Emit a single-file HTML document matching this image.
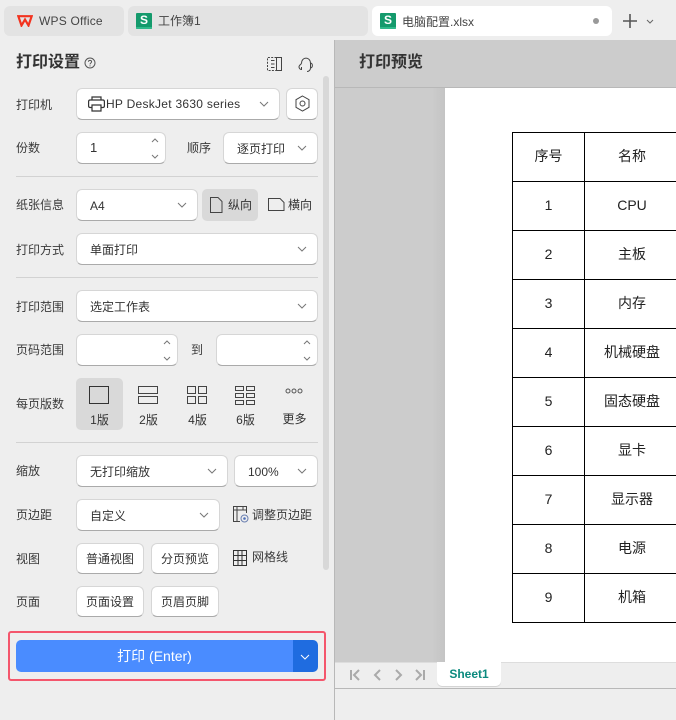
<!DOCTYPE html>
<html lang="zh"><head><meta charset="utf-8"><title>打印设置</title>
<style>
html,body{margin:0;padding:0}
body{width:676px;height:720px;overflow:hidden;position:relative;background:#eee;font-family:"Liberation Sans","Noto Sans CJK SC",sans-serif;font-size:12px;color:#333}
.a,.box,.t,svg.i{position:absolute}
.box{box-sizing:border-box;background:#fff;border:1px solid #d6d6d6;border-bottom-color:#aaa;border-radius:6px}
.t{white-space:nowrap;line-height:16px}
.l{color:#3a3a3a;left:16px}
.hr{position:absolute;left:16px;width:302px;height:1px;background:#d2d2d2}
svg.i{fill:none;stroke:#555;stroke-width:1}
.c{position:absolute;width:10px;height:6px}
.cell{position:absolute;text-align:center;font-size:14px;line-height:20px;color:#222;white-space:nowrap}
.ctr{text-align:center}
.s{position:absolute;width:16px;height:16px;background:#149a6c;border-radius:1px;color:#fff;text-align:center;font:bold 12px/14px "Liberation Sans",sans-serif;overflow:hidden}
.s:after{content:"";position:absolute;left:0;right:0;bottom:0;height:2px;background:#2fb98a}
</style></head><body>
<!-- tabs -->
<div class="a" style="left:4px;top:6px;width:120px;height:30px;background:#e3e3e3;border-radius:6px"></div>
<svg class="i" style="left:17px;top:15px;stroke:#f2331f;stroke-width:2.2;stroke-linejoin:miter" width="16" height="12" viewBox="0 0 16 12"><path d="M1.300 1.200 4.500 10.500 8 4.500 11.500 10.500 14.700 1.200 8 1.200Z"/></svg>
<div class="t" style="left:39px;top:13px;color:#444;letter-spacing:.2px">WPS Office</div>
<div class="a" style="left:128px;top:6px;width:240px;height:30px;background:#e3e3e3;border-radius:6px"></div>
<div class="s" style="left:136px;top:13px">S</div>
<div class="t" style="left:158px;top:13px;color:#444">工作簿1</div>
<div class="a" style="left:372px;top:6px;width:240px;height:30px;background:#fff;border-radius:6px"></div>
<div class="s" style="left:380px;top:13px">S</div>
<div class="t" style="left:402px;top:14px;color:#444">电脑配置.xlsx</div>
<div class="a" style="left:593px;top:18px;width:6px;height:6px;border-radius:50%;background:#999"></div>
<svg class="i" style="left:622px;top:13px;stroke:#555;stroke-width:1.6" width="16" height="16"><path d="M8 1V15M1 8H15"/></svg>
<svg class="i" style="left:646px;top:19px;stroke:#666" width="8" height="5"><path d="M1 1 4 4 7 1"/></svg>

<!-- preview -->
<div class="a" style="left:334px;top:40px;width:1px;height:680px;background:#b8b8b8"></div>
<div class="a" style="left:335px;top:40px;width:341px;height:47px;background:#ccc;border-bottom:1px solid #b8b8b8"></div>
<div class="t" style="left:359px;top:53px;font-size:16px;line-height:20px;font-weight:700;color:#333">打印预览</div>
<div class="a" style="left:335px;top:88px;width:110px;height:574px;background:linear-gradient(90deg,#ccc 0,#ccc 88%,#c4c4c4 100%)"></div>
<div class="a" style="left:445px;top:88px;width:231px;height:574px;background:#fff"></div>
<div class="a" style="left:512px;top:132px;width:180px;height:491px;box-sizing:border-box;border:1px solid #000;border-bottom:1px solid #000"></div>
<div class="a" style="left:584px;top:132px;width:1px;height:491px;background:#000"></div>
<div class="a" style="left:512px;top:181px;width:164px;height:1px;background:#000"></div>
<div class="a" style="left:512px;top:230px;width:164px;height:1px;background:#000"></div>
<div class="a" style="left:512px;top:279px;width:164px;height:1px;background:#000"></div>
<div class="a" style="left:512px;top:328px;width:164px;height:1px;background:#000"></div>
<div class="a" style="left:512px;top:377px;width:164px;height:1px;background:#000"></div>
<div class="a" style="left:512px;top:426px;width:164px;height:1px;background:#000"></div>
<div class="a" style="left:512px;top:475px;width:164px;height:1px;background:#000"></div>
<div class="a" style="left:512px;top:524px;width:164px;height:1px;background:#000"></div>
<div class="a" style="left:512px;top:573px;width:164px;height:1px;background:#000"></div>
<div class="cell" style="left:513px;width:71px;top:146px">序号</div><div class="cell" style="left:585px;width:94px;top:146px">名称</div>
<div class="cell" style="left:513px;width:71px;top:195px">1</div><div class="cell" style="left:585px;width:94px;top:195px">CPU</div>
<div class="cell" style="left:513px;width:71px;top:244px">2</div><div class="cell" style="left:585px;width:94px;top:244px">主板</div>
<div class="cell" style="left:513px;width:71px;top:293px">3</div><div class="cell" style="left:585px;width:94px;top:293px">内存</div>
<div class="cell" style="left:513px;width:71px;top:342px">4</div><div class="cell" style="left:585px;width:94px;top:342px">机械硬盘</div>
<div class="cell" style="left:513px;width:71px;top:391px">5</div><div class="cell" style="left:585px;width:94px;top:391px">固态硬盘</div>
<div class="cell" style="left:513px;width:71px;top:440px">6</div><div class="cell" style="left:585px;width:94px;top:440px">显卡</div>
<div class="cell" style="left:513px;width:71px;top:489px">7</div><div class="cell" style="left:585px;width:94px;top:489px">显示器</div>
<div class="cell" style="left:513px;width:71px;top:538px">8</div><div class="cell" style="left:585px;width:94px;top:538px">电源</div>
<div class="cell" style="left:513px;width:71px;top:587px">9</div><div class="cell" style="left:585px;width:94px;top:587px">机箱</div>

<!-- sheet bar -->
<div class="a" style="left:335px;top:662px;width:341px;height:26px;background:#eee;border-top:1px solid #ddd;box-sizing:border-box"></div>
<div class="a" style="left:335px;top:688px;width:341px;height:1px;background:#b8b8b8"></div>
<svg class="i" style="left:349px;top:669px;stroke:#aaa;stroke-width:2" width="80" height="12"><path d="M2 1V11M10 1 5 6 10 11M31 1 26 6 31 11M47 1 52 6 47 11M67 1 72 6 67 11M75 1V11"/></svg>
<div class="a ctr" style="left:437px;top:662px;width:64px;height:24px;background:#fff;border-radius:0 0 5px 5px;box-shadow:0 1px 0 #d4d4d4;font-size:12px;font-weight:bold;line-height:24px;color:#0b8a7e">Sheet1</div>

<!-- settings header -->
<div class="t" style="left:16px;top:53px;font-size:16px;line-height:20px;font-weight:700;color:#333">打印设置</div>
<svg class="i" style="left:84px;top:57px;stroke:#555" width="12" height="12"><circle cx="6" cy="6" r="5"/><path d="M4.400 4.800C4.400 2.900 7.600 2.900 7.600 4.800 7.600 6 6 6 6 7.400M6 8.400V9.400"/></svg>
<svg class="i" style="left:267px;top:57px;stroke:#444" width="15" height="14"><path d="M9.500.5H.5V13.500H9.500" stroke-dasharray="2 1.300"/><path d="M9.500.5H14.500V13.500H9.500ZM4 3.500H7.500M4 7H7.500M4 10.500H7.500"/></svg>
<svg class="i" style="left:298px;top:56px;stroke:#444" width="16" height="17"><path d="M3.500 7.500C3.500 .3 12.500 .3 12.500 7.500V12C12.500 14 11 15.500 9 15.500M3.500 7.500 1.500 9.500C.3 11 1.500 13.500 3.500 13.500V11M12.500 7C15 7.500 15 11.500 12.500 12"/></svg>

<div class="a" style="left:323px;top:76px;width:6px;height:494px;background:#d8d8d8;border-radius:3px"></div>

<!-- row: printer -->
<div class="t l" style="top:97px">打印机</div>
<div class="box" style="left:76px;top:88px;width:204px;height:32px"></div>
<svg class="i" style="left:88px;top:96px;stroke:#333;stroke-width:1.200" width="17" height="16"><path d="M4 4V1H13V4M4 11.500H2A1.500 1.500 0 0 1 .6 10V5.500A1.500 1.500 0 0 1 2 4H15A1.500 1.500 0 0 1 16.400 5.500V10A1.500 1.500 0 0 1 15 11.500H13M4 9H13V15H4Z"/></svg>
<div class="t" style="left:106px;top:96px;color:#333;letter-spacing:.27px">HP DeskJet 3630 series</div>
<svg class="c" style="left:259px;top:101px" viewBox="0 0 10 6" fill="none" stroke="#777"><path d="M1 1 5 5 9 1"/></svg>
<div class="box" style="left:286px;top:88px;width:32px;height:32px"></div>
<svg class="i" style="left:295px;top:95px;stroke:#444" width="15" height="17"><path d="M7.500 1 14 4.700V12.300L7.500 16 1 12.300V4.700Z"/><circle cx="7.500" cy="8.500" r="2.500"/></svg>

<!-- row: copies -->
<div class="t l" style="top:140px">份数</div>
<div class="box" style="left:76px;top:132px;width:90px;height:32px"></div>
<div class="t" style="left:90px;top:140px;font-size:13px">1</div>
<svg class="i" style="left:150px;top:137px;stroke:#777" width="10" height="23"><path d="M2 5 5 2 8 5M2 18 5 21 8 18"/></svg>
<div class="t" style="left:187px;top:140px;color:#3a3a3a">顺序</div>
<div class="box" style="left:223px;top:132px;width:95px;height:32px"></div>
<div class="t" style="left:237px;top:141px">逐页打印</div>
<svg class="c" style="left:297px;top:145px" viewBox="0 0 10 6" fill="none" stroke="#777"><path d="M1 1 5 5 9 1"/></svg>
<div class="hr" style="top:176px"></div>

<!-- row: paper -->
<div class="t l" style="top:197px">纸张信息</div>
<div class="box" style="left:76px;top:189px;width:122px;height:32px"></div>
<div class="t" style="left:90px;top:198px">A4</div>
<svg class="c" style="left:177px;top:202px" viewBox="0 0 10 6" fill="none" stroke="#777"><path d="M1 1 5 5 9 1"/></svg>
<div class="a" style="left:202px;top:189px;width:56px;height:32px;background:#d9d9d9;border-radius:5px"></div>
<svg class="i" style="left:210px;top:197px;stroke:#444" width="13" height="16"><path d="M.5.5H8L12 4.500V15.500H.5Z"/></svg>
<div class="t" style="left:228px;top:197px">纵向</div>
<svg class="i" style="left:268px;top:198px;stroke:#444" width="17" height="14"><path d="M.5.5H12L16 4.500V12.500H.5Z"/></svg>
<div class="t" style="left:288px;top:197px">横向</div>

<!-- row: mode -->
<div class="t l" style="top:242px">打印方式</div>
<div class="box" style="left:76px;top:233px;width:242px;height:32px"></div>
<div class="t" style="left:90px;top:242px">单面打印</div>
<svg class="c" style="left:297px;top:246px" viewBox="0 0 10 6" fill="none" stroke="#777"><path d="M1 1 5 5 9 1"/></svg>
<div class="hr" style="top:277px"></div>

<!-- row: range -->
<div class="t l" style="top:299px">打印范围</div>
<div class="box" style="left:76px;top:290px;width:242px;height:32px"></div>
<div class="t" style="left:90px;top:299px">选定工作表</div>
<svg class="c" style="left:297px;top:303px" viewBox="0 0 10 6" fill="none" stroke="#777"><path d="M1 1 5 5 9 1"/></svg>

<!-- row: pages -->
<div class="t l" style="top:342px">页码范围</div>
<div class="box" style="left:76px;top:334px;width:102px;height:32px"></div>
<svg class="i" style="left:162px;top:339px;stroke:#777" width="10" height="23"><path d="M2 5 5 2 8 5M2 18 5 21 8 18"/></svg>
<div class="t" style="left:191px;top:342px;color:#3a3a3a">到</div>
<div class="box" style="left:216px;top:334px;width:102px;height:32px"></div>
<svg class="i" style="left:302px;top:339px;stroke:#777" width="10" height="23"><path d="M2 5 5 2 8 5M2 18 5 21 8 18"/></svg>

<!-- row: per page -->
<div class="t l" style="top:396px">每页版数</div>
<div class="a" style="left:76px;top:378px;width:47px;height:52px;background:#d9d9d9;border-radius:5px"></div>
<svg class="i" style="left:89px;top:386px;stroke:#333" width="20" height="18"><rect x=".5" y=".5" width="19" height="17"/></svg>
<div class="t ctr" style="left:76px;width:47px;top:412px">1版</div>
<svg class="i" style="left:138px;top:386px;stroke:#444" width="20" height="18"><rect x=".5" y=".5" width="19" height="7"/><rect x=".5" y="10.500" width="19" height="7"/></svg>
<div class="t ctr" style="left:125px;width:47px;top:412px">2版</div>
<svg class="i" style="left:187px;top:386px;stroke:#444" width="20" height="18"><rect x=".5" y=".5" width="8" height="7"/><rect x="11.500" y=".5" width="8" height="7"/><rect x=".5" y="10.500" width="8" height="7"/><rect x="11.500" y="10.500" width="8" height="7"/></svg>
<div class="t ctr" style="left:174px;width:47px;top:412px">4版</div>
<svg class="i" style="left:235px;top:386px;stroke:#444" width="20" height="19"><rect x=".5" y=".5" width="8" height="4"/><rect x="11.500" y=".5" width="8" height="4"/><rect x=".5" y="7.500" width="8" height="4"/><rect x="11.500" y="7.500" width="8" height="4"/><rect x=".5" y="14.500" width="8" height="4"/><rect x="11.500" y="14.500" width="8" height="4"/></svg>
<div class="t ctr" style="left:222px;width:47px;top:412px">6版</div>
<svg class="i" style="left:285px;top:388px;stroke:#555" width="18" height="6"><circle cx="3" cy="3" r="2"/><circle cx="9" cy="3" r="2"/><circle cx="15" cy="3" r="2"/></svg>
<div class="t ctr" style="left:271px;width:47px;top:411px">更多</div>
<div class="hr" style="top:442px"></div>

<!-- row: scale -->
<div class="t l" style="top:463px">缩放</div>
<div class="box" style="left:76px;top:455px;width:152px;height:32px"></div>
<div class="t" style="left:90px;top:464px">无打印缩放</div>
<svg class="c" style="left:207px;top:468px" viewBox="0 0 10 6" fill="none" stroke="#777"><path d="M1 1 5 5 9 1"/></svg>
<div class="box" style="left:234px;top:455px;width:84px;height:32px"></div>
<div class="t" style="left:248px;top:464px">100%</div>
<svg class="c" style="left:297px;top:468px" viewBox="0 0 10 6" fill="none" stroke="#777"><path d="M1 1 5 5 9 1"/></svg>

<!-- row: margin -->
<div class="t l" style="top:507px">页边距</div>
<div class="box" style="left:76px;top:499px;width:144px;height:32px"></div>
<div class="t" style="left:90px;top:508px">自定义</div>
<svg class="c" style="left:199px;top:512px" viewBox="0 0 10 6" fill="none" stroke="#777"><path d="M1 1 5 5 9 1"/></svg>
<svg class="i" style="left:233px;top:506px;stroke:#444" width="17" height="17"><path d="M7 15.500H.5V.5H13.500V7M.5 4H13.500M4 .5V15.500M10 .5V4"/><circle cx="11.500" cy="12.500" r="3.500" stroke="#6a7fb0"/><circle cx="11.500" cy="12.500" r="1.300" fill="#4d6fb8" stroke="none"/></svg>
<div class="t" style="left:252px;top:507px;color:#3a3a3a">调整页边距</div>

<!-- row: view -->
<div class="t l" style="top:551px">视图</div>
<div class="box ctr" style="left:76px;top:543px;width:68px;height:31px;line-height:31px">普通视图</div>
<div class="box ctr" style="left:151px;top:543px;width:68px;height:31px;line-height:31px">分页预览</div>
<svg class="i" style="left:233px;top:550px;stroke:#333" width="14" height="16"><path d="M.5.5H13.500V15.500H.5ZM5 .5V15.500M9 .5V15.500M.5 5.500H13.500M.5 10.500H13.500"/></svg>
<div class="t" style="left:252px;top:549px;color:#3a3a3a">网格线</div>

<!-- row: page -->
<div class="t l" style="top:594px">页面</div>
<div class="box ctr" style="left:76px;top:586px;width:68px;height:31px;line-height:31px">页面设置</div>
<div class="box ctr" style="left:151px;top:586px;width:68px;height:31px;line-height:31px">页眉页脚</div>

<!-- print -->
<div class="a" style="left:8px;top:631px;width:318px;height:50px;box-sizing:border-box;border:2px solid #f4566c;border-radius:3px"></div>
<div class="a ctr" style="left:16px;top:640px;width:277px;height:32px;background:#4a8cff;border-radius:5px 0 0 5px;color:#fff;font-size:14px;line-height:33px">打印 (Enter)</div>
<div class="a" style="left:293px;top:640px;width:25px;height:32px;background:#1f6ce0;border-radius:0 5px 5px 0"></div>
<svg class="c" style="left:300px;top:654px" viewBox="0 0 10 6" fill="none" stroke="#fff"><path d="M1 1 5 5 9 1"/></svg>
</body></html>
